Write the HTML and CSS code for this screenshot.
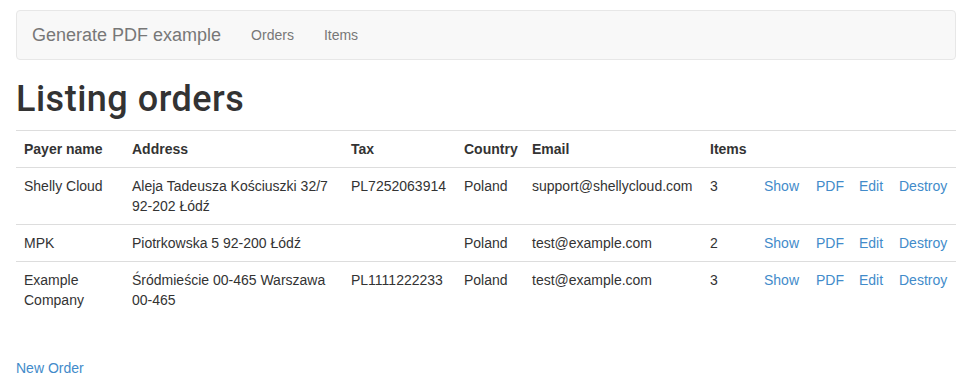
FILE: index.html
```html
<!DOCTYPE html>
<html lang="en">
<head>
    <meta charset="UTF-8">
    <title>Generate PDF example</title>
    <link rel="stylesheet" href="styles.css">
</head>
<body>
    <div class="container">
        <nav class="navbar">
            <a class="navbar-brand" href="#">Generate PDF example</a>
            <a class="nav-link" href="#">Orders</a>
            <a class="nav-link" href="#">Items</a>
        </nav>

        <h1>Listing orders</h1>

        <table class="table">
            <thead>
                <tr>
                    <th class="col-name">Payer name</th>
                    <th class="col-address">Address</th>
                    <th class="col-tax">Tax</th>
                    <th class="col-country">Country</th>
                    <th class="col-email">Email</th>
                    <th class="col-items">Items</th>
                    <th class="col-show"></th>
                    <th class="col-pdf"></th>
                    <th class="col-edit"></th>
                    <th class="col-destroy"></th>
                </tr>
            </thead>
            <tbody>
                <tr>
                    <td>Shelly Cloud</td>
                    <td>Aleja Tadeusza Kościuszki 32/7 92-202 Łódź</td>
                    <td>PL7252063914</td>
                    <td>Poland</td>
                    <td>support@shellycloud.com</td>
                    <td>3</td>
                    <td><a href="#">Show</a></td>
                    <td><a href="#">PDF</a></td>
                    <td><a href="#">Edit</a></td>
                    <td><a href="#">Destroy</a></td>
                </tr>
                <tr>
                    <td>MPK</td>
                    <td>Piotrkowska 5 92-200 Łódź</td>
                    <td></td>
                    <td>Poland</td>
                    <td>test@example.com</td>
                    <td>2</td>
                    <td><a href="#">Show</a></td>
                    <td><a href="#">PDF</a></td>
                    <td><a href="#">Edit</a></td>
                    <td><a href="#">Destroy</a></td>
                </tr>
                <tr>
                    <td>Example Company</td>
                    <td>Śródmieście 00-465 Warszawa 00-465</td>
                    <td>PL1111222233</td>
                    <td>Poland</td>
                    <td>test@example.com</td>
                    <td>3</td>
                    <td><a href="#">Show</a></td>
                    <td><a href="#">PDF</a></td>
                    <td><a href="#">Edit</a></td>
                    <td><a href="#">Destroy</a></td>
                </tr>
            </tbody>
        </table>

        <br>

        <a href="#">New Order</a>
    </div>
</body>
</html>
```

FILE: styles.css
```css
* {
    box-sizing: border-box;
}

body {
    margin: 0;
    font-family: "Liberation Sans", Arial, sans-serif;
    font-size: 14px;
    line-height: 20px;
    color: #333;
    background-color: #fff;
}

a {
    color: #428bca;
    text-decoration: none;
}

.container {
    width: 940px;
    margin-left: 16px;
    padding-top: 10px;
}

.navbar {
    display: flex;
    align-items: center;
    height: 50px;
    margin-bottom: 20px;
    background-color: #f8f8f8;
    border: 1px solid #e7e7e7;
    border-radius: 4px;
}

.navbar-brand {
    padding: 15px;
    font-size: 18px;
    line-height: 20px;
    color: #777;
}

.nav-link {
    padding: 15px;
    color: #777;
}

h1 {
    margin: 20px 0 10px;
    font-family: Roboto, "Liberation Sans", sans-serif;
    font-size: 36px;
    font-weight: 500;
    line-height: 1.1;
    letter-spacing: 0.5px;
}

.table {
    width: 100%;
    margin-bottom: 20px;
    border-collapse: collapse;
    table-layout: fixed;
}

.table th,
.table td {
    padding: 8px;
    text-align: left;
    vertical-align: top;
    border-top: 1px solid #ddd;
}

.table th {
    font-weight: bold;
}

.col-name { width: 108px; }
.col-address { width: 219px; }
.col-tax { width: 113px; }
.col-country { width: 68px; }
.col-email { width: 178px; }
.col-items { width: 54px; }
.col-show { width: 52px; }
.col-pdf { width: 43px; }
.col-edit { width: 40px; }
.col-destroy { width: 65px; }
```
